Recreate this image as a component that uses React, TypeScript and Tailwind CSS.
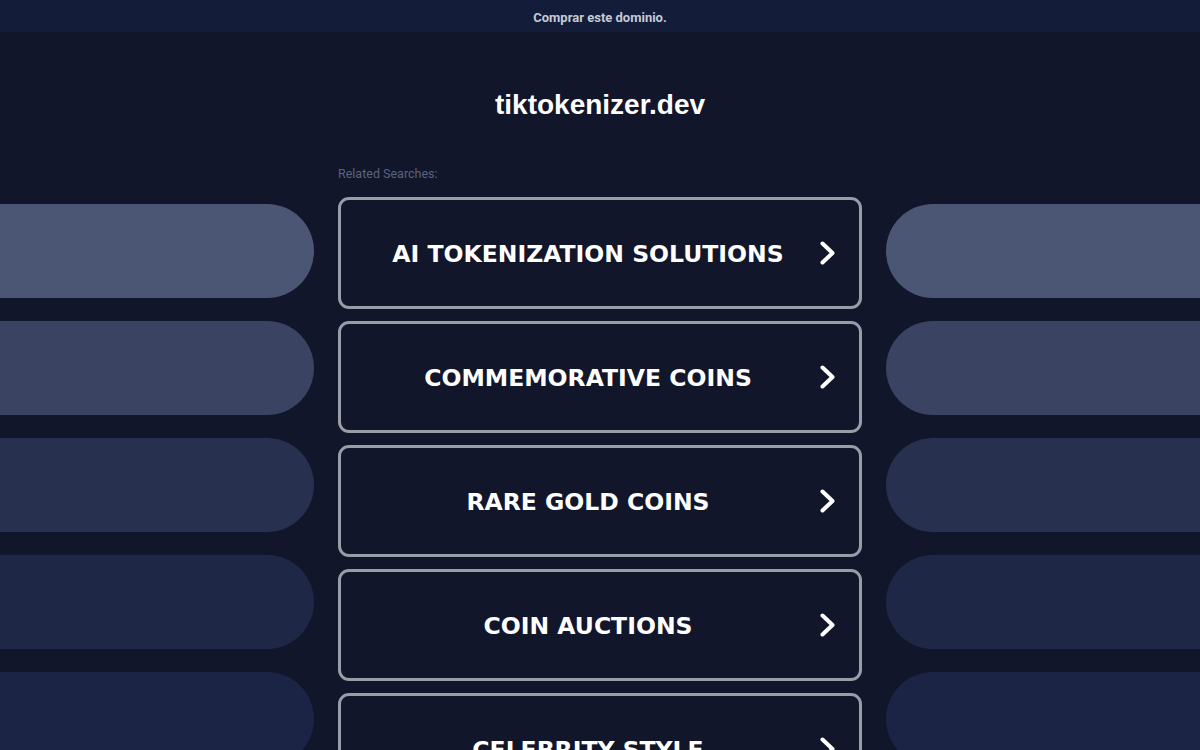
import React from "react";

const searches = [
  "AI TOKENIZATION SOLUTIONS",
  "COMMEMORATIVE COINS",
  "RARE GOLD COINS",
  "COIN AUCTIONS",
  "CELEBRITY STYLE",
];

const pillColors = [
  "bg-[#4b5674]",
  "bg-[#3a4362]",
  "bg-[#283050]",
  "bg-[#1e2746]",
  "bg-[#1b2445]",
];

const Chevron = () => (
  <svg width="15" height="24" viewBox="0 0 15 24" fill="none" className="shrink-0">
    <polyline
      points="2.5,2.5 12.5,12 2.5,21.5"
      stroke="white"
      strokeWidth="4"
      strokeLinecap="round"
      strokeLinejoin="round"
    />
  </svg>
);

const SideColumn: React.FC<{ side: "left" | "right" }> = ({ side }) => (
  <div className="w-[314px] shrink-0 pt-[38px] flex flex-col gap-[23px]">
    {pillColors.map((c, i) => (
      <div
        key={i}
        className={`h-[94px] ${c} ${
          side === "left" ? "rounded-r-full" : "rounded-l-full"
        }`}
      ></div>
    ))}
  </div>
);

export default function App() {
  return (
    <div
      className="h-[750px] overflow-hidden bg-[#11162b]"
      style={{ fontFamily: '"Liberation Sans", Arial, sans-serif' }}
    >
      <div className="h-8 bg-[#131d3a] flex items-center justify-center pt-[3px]">
        <span className="text-[13px] font-bold text-[#c5cad6] font-['Roboto',sans-serif]">
          Comprar este dominio.
        </span>
      </div>

      <div className="pt-[55px] h-[134px] text-center">
        <h1 className="text-[28px] leading-[36px] font-bold text-white">
          tiktokenizer.dev
        </h1>
      </div>

      <div className="flex gap-[24px]">
        <SideColumn side="left" />

        <div className="w-[524px] shrink-0">
          <div className="text-[12.5px] leading-[16px] text-[#5b647c] font-['Roboto',sans-serif]">
            Related Searches:
          </div>
          <div className="mt-[15px] flex flex-col gap-[12px]">
            {searches.map((s) => (
              <a
                key={s}
                href="#"
                className="h-[112px] border-[3px] border-[#9a9da6] rounded-[11px] flex items-center pl-[24px] pr-[24px]"
              >
                <span className="flex-1 text-center text-white font-bold text-[23.5px] pt-[4px] font-['DejaVu_Sans',Verdana,sans-serif]">
                  {s}
                </span>
                <span className="ml-[9px]">
                  <Chevron />
                </span>
              </a>
            ))}
          </div>
        </div>

        <SideColumn side="right" />
      </div>
    </div>
  );
}
